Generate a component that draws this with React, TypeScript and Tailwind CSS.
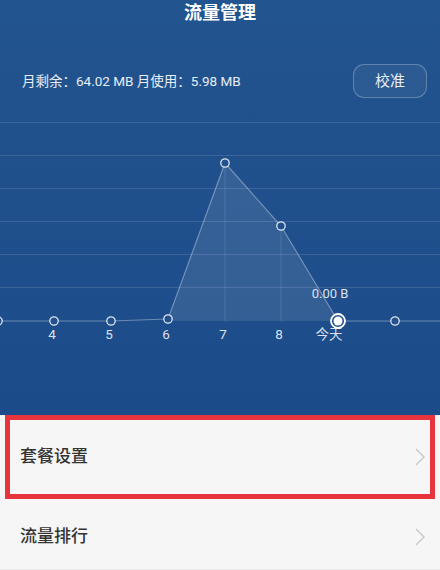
const days = [
    { x: -2, y: 199, label: '' },
    { x: 54, y: 199, label: '4' },
    { x: 111, y: 199, label: '5' },
    { x: 168, y: 197, label: '6' },
    { x: 225, y: 41, label: '7' },
    { x: 281, y: 104, label: '8' },
    { x: 338, y: 199, label: '今天' },
    { x: 395, y: 199, label: '' },
];

function UsageChart() {
    const line = days.map((d) => `${d.x},${d.y}`).join(' ') + ' 440,199';
    const area = '168,199 168,197 225,41 281,104 338,199';
    return (
        <svg width="440" height="293" viewBox="0 0 440 293" className="block">
            {[0, 33, 66, 99, 132, 165].map((y) => (
                <line key={y} x1="0" x2="440" y1={y + 0.5} y2={y + 0.5} stroke="rgba(255,255,255,0.12)" strokeWidth="1" />
            ))}
            <polygon points={area} fill="rgba(255,255,255,0.1)" />
            <line x1="225" x2="225" y1="41" y2="199" stroke="rgba(255,255,255,0.12)" />
            <line x1="281" x2="281" y1="104" y2="199" stroke="rgba(255,255,255,0.12)" />
            <polyline points={line} fill="none" stroke="rgba(255,255,255,0.35)" strokeWidth="1.2" />
            {days.map((d, i) =>
                d.label === '今天' ? (
                    <g key={i}>
                        <circle cx={d.x} cy={d.y} r="7" fill="#1f4f8c" stroke="#fff" strokeWidth="1.8" />
                        <circle cx={d.x} cy={d.y} r="4.5" fill="#fff" />
                    </g>
                ) : (
                    <circle key={i} cx={d.x} cy={d.y} r="4.2" fill="#21528f" stroke="rgba(255,255,255,0.85)" strokeWidth="1.3" />
                )
            )}
            {days.map((d, i) =>
                d.label ? (
                    <text key={`t${i}`} x={d.label === '今天' ? d.x - 9 : d.x - 2} y="217" fill="rgba(255,255,255,0.85)" fontSize="13.5" textAnchor="middle">
                        {d.label}
                    </text>
                ) : null
            )}
            <text x="330" y="176" fill="rgba(255,255,255,0.85)" fontSize="13" textAnchor="middle">
                0.00 B
            </text>
        </svg>
    );
}

function Chevron() {
    return (
        <svg width="10" height="18" viewBox="0 0 10 18">
            <polyline points="1,1 9,9 1,17" fill="none" stroke="#c8c8c8" strokeWidth="1.4" />
        </svg>
    );
}

export default function App() {
    return (
        <div
            className="w-[440px] h-[570px] overflow-hidden bg-[#f6f6f6]"
            style={{ fontFamily: 'Roboto, "Noto Sans CJK SC", sans-serif' }}
        >
            <div className="h-[415px] bg-gradient-to-b from-[#22548f] to-[#1c4b89] text-white">
                <div className="h-[28px] text-center text-[18px] leading-[26px] font-bold">流量管理</div>
                <div className="mt-[36px] flex h-[34px] items-center justify-between pl-[22px] pr-[13px]">
                    <span className="text-[13.5px] text-white/90">月剩余：64.02 MB 月使用：5.98 MB</span>
                    <button
                        type="button"
                        className="flex h-[34px] w-[74px] items-center justify-center rounded-[11px] border border-white/25 bg-white/5 text-[15px] text-white/90"
                    >
                        校准
                    </button>
                </div>
                <div className="mt-[24px]">
                    <UsageChart />
                </div>
            </div>
            <div className="mx-[5px] flex h-[84px] items-center justify-between border-[5px] border-[#e8353d] pl-[10px] pr-[5px]">
                <span className="text-[17px] font-medium text-[#333]">套餐设置</span>
                <Chevron />
            </div>
            <div className="flex h-[71px] items-center justify-between border-b border-[#e8e8e8] pt-[5px] pl-[20px] pr-[15px]">
                <span className="text-[17px] font-medium text-[#333]">流量排行</span>
                <Chevron />
            </div>
        </div>
    );
}
